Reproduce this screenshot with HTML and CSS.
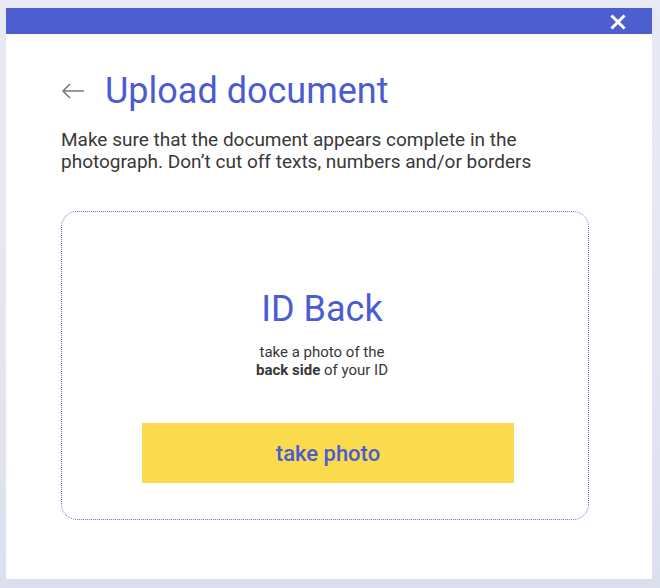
FILE: index.html
```html
<!DOCTYPE html>
<html>
<head>
<meta charset="utf-8">
<link rel="stylesheet" href="styles.css">
</head>
<body>
<div class="modal">
  <div class="topbar">
    <svg class="close" width="16" height="16" viewBox="0 0 16 16"><path d="M2.5 2.5 L13.5 13.5 M13.5 2.5 L2.5 13.5" stroke="#fff" stroke-width="3" stroke-linecap="square"/></svg>
  </div>
  <div class="content">
    <div class="heading">
      <svg class="back" width="24" height="16" viewBox="0 0 24 16"><path d="M23 8 H2 M9 1 L2 8 L9 15" fill="none" stroke="#7a7a7a" stroke-width="1.6"/></svg>
      <h1 class="title">Upload document</h1>
    </div>
    <p class="desc">Make sure that the document appears complete in the photograph. Don’t cut off texts, numbers and/or borders</p>
    <div class="dropbox">
      <h2 class="side">ID Back</h2>
      <p class="hint">take a photo of the<br><b>back side</b> of your ID</p>
      <button class="btn">take photo</button>
    </div>
  </div>
</div>
</body>
</html>
```
FILE: styles.css
```css
html, body {
  margin: 0;
  padding: 0;
}
body {
  width: 660px;
  height: 588px;
  overflow: hidden;
  background: linear-gradient(180deg, #e8e9f4 0%, #e4e6f2 60%, #dcdfee 100%);
  font-family: Roboto, "Liberation Sans", sans-serif;
  padding-top: 8px;
  box-sizing: border-box;
}
.modal {
  margin-left: 6px;
  width: 646px;
  height: 571px;
  background: #fff;
  display: flex;
  flex-direction: column;
}
.topbar {
  height: 26px;
  background: #4d5ed0;
  display: flex;
  align-items: center;
  justify-content: flex-end;
  padding-right: 26px;
}
.close {
  display: block;
  margin-top: 1px;
}
.content {
  padding: 36px 63px 0 55px;
}
.heading {
  display: flex;
  align-items: center;
  gap: 20px;
}
.back {
  display: block;
  margin-top: 0;
}
.title {
  margin: 0;
  font-size: 36px;
  font-weight: 400;
  color: #4b5bd0;
  line-height: 42px;
}
.desc {
  margin: 17px 0 0;
  font-size: 19px;
  line-height: 22px;
  color: #383838;
}
.dropbox {
  margin-top: 38px;
  border: 1px dotted #6a72de;
  border-radius: 16px;
  height: 309px;
  box-sizing: border-box;
  display: flex;
  flex-direction: column;
  align-items: center;
  padding-top: 76px;
  padding-right: 6px;
}
.side {
  margin: 0;
  font-size: 36px;
  font-weight: 400;
  color: #4b5bd0;
  line-height: 42px;
}
.hint {
  margin: 13px 0 0;
  font-size: 15px;
  line-height: 18px;
  color: #383838;
  text-align: center;
}
.hint b {
  font-weight: 700;
}
.btn {
  margin-top: 44px;
  margin-left: 12px;
  width: 372px;
  height: 60px;
  border: 0;
  background: #fadb4e;
  color: #4b5bd0;
  font-family: Roboto, "Liberation Sans", sans-serif;
  font-size: 22px;
  font-weight: 500;
  padding: 0;
}
```
